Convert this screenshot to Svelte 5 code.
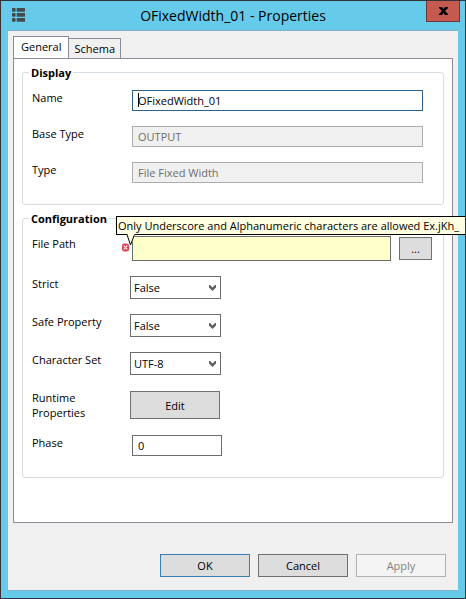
<script>
  let name = $state('OFixedWidth_01');
  let filePath = $state('');
  let strict = $state('False');
  let safe = $state('False');
  let charset = $state('UTF-8');
  let phase = $state('0');
  let tab = $state('General');
</script>

{#snippet picker(id, label, value, options, set)}
  <div class="row choice">
    <label for={id}>{label}</label>
    <div class="select">
      <select {id} {value} onchange={(e) => set(e.currentTarget.value)}>
        {#each options as option}<option>{option}</option>{/each}
      </select>
      <svg viewBox="0 0 7 6" width="7" height="6" aria-hidden="true">
        <path d="M0 0H1L3.5 2.5L6 0H7V2.5L3.5 6L0 2.5Z" fill="#606060" />
      </svg>
    </div>
  </div>
{/snippet}

<div class="window">
  <header>
    <svg class="app-icon" viewBox="0 0 13 14" width="13" height="14" aria-hidden="true">
      <g fill="#46494c">
        <rect x="0" y="0" width="3.6" height="3.7" rx="0.8" /><rect x="4.7" y="0" width="8.3" height="3.7" rx="0.5" />
        <rect x="0" y="5" width="3.6" height="3.7" rx="0.8" /><rect x="4.7" y="5" width="8.3" height="3.7" rx="0.5" />
        <rect x="0" y="10" width="3.6" height="3.7" rx="0.8" /><rect x="4.7" y="10" width="8.3" height="3.7" rx="0.5" />
      </g>
    </svg>
    <h1>{name} - Properties</h1>
    <button class="close" aria-label="Close">
      <svg viewBox="0 0 9 8" width="9" height="8" aria-hidden="true">
        <path d="M0 0H3L4.5 2L6 0H9V1L6 4L9 7V8H6L4.5 6L3 8H0V7L3 4L0 1Z" fill="#000" />
      </svg>
    </button>
  </header>

  <main>
    <div class="tabs" role="tablist">
      {#each ['General', 'Schema'] as t}
        <button role="tab" class:active={tab === t} aria-selected={tab === t} onclick={() => (tab = t)}>{t}</button>
      {/each}
    </div>

    <section class="pane">
      <fieldset>
        <legend>Display</legend>
        <div class="row">
          <label for="name">Name</label>
          <div class="field wide">
            <input id="name" class="focus" bind:value={name} />
            <span class="caret"></span>
          </div>
        </div>
        <div class="row">
          <label for="base">Base Type</label>
          <div class="field wide"><input id="base" value="OUTPUT" disabled /></div>
        </div>
        <div class="row">
          <label for="type">Type</label>
          <div class="field wide"><input id="type" value="File Fixed Width" disabled /></div>
        </div>
      </fieldset>

      <fieldset>
        <legend>Configuration</legend>
        <div class="row file">
          <label for="path">File Path</label>
          <div class="field path">
            <input id="path" aria-describedby="hint" bind:value={filePath} />
            <button class="browse">...</button>
            <svg class="error" viewBox="0 0 9 9" width="9" height="9" aria-hidden="true">
              <rect x="1" y="0.5" width="7" height="8" rx="2.5" fill="#d9434f" />
              <path d="M2.7 2.5L6.3 6.5M6.3 2.5L2.7 6.5" stroke="#fff" stroke-width="1.1" />
            </svg>
            <div class="tip" id="hint" role="tooltip">
              Only Underscore and Alphanumeric characters are allowed Ex.jKh_
              <svg viewBox="0 0 10 12" width="10" height="12" aria-hidden="true">
                <path d="M1 0H9V1L5 11Z" fill="#ffffe1" />
                <path d="M1 .5L4.5 11L8.5 .5" fill="none" stroke="#000" />
              </svg>
            </div>
          </div>
        </div>
        {@render picker('strict', 'Strict', strict, ['False', 'True'], (v) => (strict = v))}
        {@render picker('safe', 'Safe Property', safe, ['False', 'True'], (v) => (safe = v))}
        {@render picker('charset', 'Character Set', charset, ['UTF-8', 'UTF-16'], (v) => (charset = v))}
        <div class="row runtime">
          <label for="edit">Runtime Properties</label>
          <button id="edit" class="edit">Edit</button>
        </div>
        <div class="row">
          <label for="phase">Phase</label>
          <div class="field short"><input id="phase" bind:value={phase} /></div>
        </div>
      </fieldset>
    </section>

    <footer>
      <button class="default">OK</button>
      <button>Cancel</button>
      <button disabled>Apply</button>
    </footer>
  </main>
</div>

<style>
  .window, .window * { box-sizing: border-box; }
  .window {
    min-height: 100vh;
    display: flex;
    flex-direction: column;
    padding: 0 7px 7px;
    border: 1px solid #333338;
    background: #66cbea;
    color: #000;
    font: 11px/15px 'Open Sans', 'Noto Sans', sans-serif;
    overflow: hidden;
  }
  button, input, select { font: inherit; color: inherit; margin: 0; border-radius: 0; }
  header {
    display: grid;
    grid-template-columns: 34px 1fr 34px;
    height: 29px;
  }
  .app-icon { margin: 7px 0 0 4px; }
  h1 { margin: 0; font-size: 14px; line-height: 30px; font-weight: 400; text-align: center; }
  .close {
    width: 34px;
    height: 21px;
    margin-left: 2px;
    padding: 0;
    display: grid;
    place-items: center;
    background: #c45a50;
    border: 1px solid #70343a;
    border-top: 0;
  }
  main {
    flex: 1;
    display: flex;
    flex-direction: column;
    padding: 5px 5px 13px;
    background: #f0f0f0;
    border-top: 1px solid #7fb0c4;
    border-bottom: 1px solid #7fb0c4;
  }
  .tabs { display: flex; align-items: flex-end; height: 23px; margin-bottom: -1px; }
  .tabs button {
    height: 21px;
    padding: 0 5px 1px;
    background: #f0f0f0;
    border: 1px solid #8c8c98;
    border-left: 0;
  }
  .tabs .active {
    height: 23px;
    padding: 0 7px 3px;
    background: #fff;
    border-left: 1px solid #8c8c98;
    border-bottom: 0;
  }
  .pane {
    flex: 1;
    padding: 5px 8px 39px;
    background: #fff;
    border: 1px solid #8c8c98;
  }
  fieldset {
    min-width: 0;
    margin: 0 0 5px;
    padding: 9px 11px 6px 9px;
    border: 1px solid #d5dde3;
    border-radius: 3px;
  }
  legend { margin-left: -3px; padding: 0 2px; line-height: 17px; font-weight: 700; }
  .row { display: flex; align-items: flex-start; height: 36px; }
  .row label { flex: none; width: 98px; padding: 0 12px 0 0; }
  .file { height: 40px; }
  .choice { height: 38px; }
  .runtime { height: 45px; }
  .field { position: relative; display: flex; margin-left: 2px; }
  .wide { flex: 1; margin-right: 9px; }
  .short { width: 90px; }
  input {
    width: 100%;
    min-width: 0;
    height: 21px;
    padding: 0 5px;
    background: #fff;
    border: 1px solid #6c6c6c;
  }
  input.focus { border-color: #2c628b; }
  input:disabled { background: #f0f0f0; border-color: #abadb0; color: #6d6d6d; }
  .caret { position: absolute; left: 6px; top: 3px; width: 1px; height: 14px; background: #000; }
  .path { flex: 1; gap: 8px; align-items: center; height: 25px; }
  .path input { flex: 1; height: 25px; background: #ffffcc; }
  button { padding: 0; background: #ddd; border: 1px solid #707070; }
  .browse { width: 33px; height: 23px; }
  .error { position: absolute; left: -11px; top: 7px; }
  .tip {
    position: absolute;
    left: -16px;
    right: -40px;
    top: -20px;
    height: 19px;
    padding: 1px 1px 0;
    background: #ffffe1;
    border: 1px solid #000;
    white-space: nowrap;
  }
  .tip svg { position: absolute; left: 9px; top: 17px; }
  .select { position: relative; width: 91px; }
  select {
    display: block;
    width: 100%;
    height: 23px;
    padding: 0 18px 0 3px;
    appearance: none;
    background: #fff;
    border: 1px solid #6c6c6c;
  }
  .select svg { position: absolute; right: 5px; top: 9px; pointer-events: none; }
  .edit { width: 90px; height: 28px; margin-top: 1px; }
  footer { display: flex; justify-content: flex-end; gap: 8px; margin-top: 31px; padding-right: 7px; }
  footer button { width: 90px; height: 23px; }
  footer .default { border-color: #3c7fb1; }
  footer button:disabled { background: #f4f4f4; border-color: #adb2b5; color: #838383; }
</style>
